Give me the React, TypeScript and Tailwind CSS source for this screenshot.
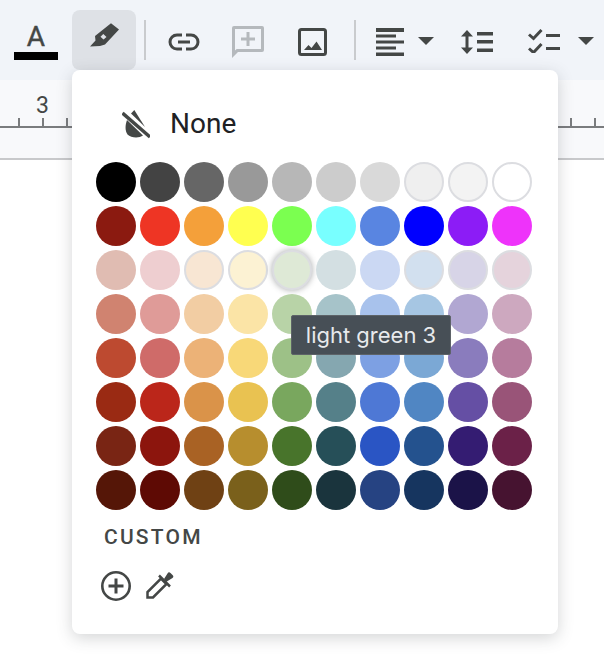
const rows: string[][] = [
  ["#000000", "#434343", "#666666", "#999999", "#b7b7b7", "#cccccc", "#d9d9d9", "#efefef", "#f3f3f3", "#ffffff"],
  ["#8b1a10", "#ee3524", "#f4a03a", "#ffff50", "#7bff50", "#78ffff", "#5985e1", "#0000ff", "#8c1cf6", "#ee33fa"],
  ["#e0bcb2", "#eeced0", "#f8e6d3", "#fcf2d3", "#dee9d6", "#d3dfe2", "#cbd8f3", "#d2e0ef", "#d7d4e7", "#e5d3dc"],
  ["#d08370", "#df9b98", "#f2cda3", "#fbe4a6", "#b8d3a7", "#a6c3c9", "#a8c2ec", "#a6c6e3", "#b1a7d2", "#cda8bf"],
  ["#bd4a30", "#cf6b69", "#ecb277", "#f8d878", "#9dc187", "#85a7b0", "#7da0e3", "#7ba8d5", "#8a7cbd", "#b67c9d"],
  ["#9a2a13", "#bb261a", "#da9349", "#e9c251", "#79a75e", "#558089", "#4e78d5", "#5086c3", "#654fa4", "#995478"],
  ["#792514", "#8c150d", "#a96224", "#b78e2e", "#48742b", "#264f58", "#2a55c4", "#24528e", "#341c72", "#6b2148"],
  ["#551607", "#5e0a04", "#6f4114", "#7a601b", "#2f4c1a", "#1a343d", "#264382", "#16355f", "#1b1348", "#461330"],
];

// swatches pale enough to need an outline
const ringed = new Set(["#efefef", "#f3f3f3", "#ffffff", "#f8e6d3", "#fcf2d3", "#dee9d6", "#d2e0ef", "#d7d4e7", "#e5d3dc"]);

function Separator() {
  return <div className="w-[2px] h-10 bg-[#c9cbce]" />;
}

function HighlighterIcon() {
  return (
    <svg width="32" height="28" viewBox="0 0 32 28" fill="currentColor" fillRule="evenodd">
      <path d="M23 0.300 31 6.500 17 21.500l-5 1.500-10 .500L7.500 17.500 7 13ZM15.300 11 12.500 13.700l3 2.800 3-2.600Z" />
    </svg>
  );
}

function LinkIcon() {
  return (
    <svg width="32" height="18" viewBox="0 0 32 18" fill="none" stroke="currentColor" strokeWidth="3">
      <path d="M14 2H9a7 7 0 0 0 0 14h5M18 2h5a7 7 0 0 1 0 14h-5M10 9h12" />
    </svg>
  );
}

function CommentIcon() {
  return (
    <svg width="32" height="32" viewBox="0 0 32 32" fill="currentColor" fillRule="evenodd">
      <path d="M2 0H30a2 2 0 0 1 2 2V24a2 2 0 0 1-2 2H6L0 32V2a2 2 0 0 1 2-2ZM3 3V24.500L4.700 23H29V3ZM14.500 6h3v5.500H23v3h-5.500V20h-3v-5.500H9v-3h5.500Z" />
    </svg>
  );
}

function ImageIcon() {
  return (
    <svg width="29" height="28" viewBox="0 0 29 28" fill="none">
      <rect x="1.500" y="1.500" width="26" height="25" rx="2" stroke="currentColor" strokeWidth="3" />
      <path fill="currentColor" d="M6 22l4.500-5 3 3 5-6.500L24 22Z" />
    </svg>
  );
}

function AlignIcon() {
  return (
    <svg width="28" height="28" viewBox="0 0 28 28" fill="currentColor">
      <path d="M0 0h28v4H0ZM0 6.500h20v3H0ZM0 12.500h28v3H0ZM0 18.500h20v3H0ZM0 24.500h28v3.500H0Z" />
    </svg>
  );
}

function Caret() {
  return (
    <svg width="16" height="8" viewBox="0 0 16 8" fill="currentColor">
      <path d="M0 0h16L8 8Z" />
    </svg>
  );
}

function LineSpacingIcon() {
  return (
    <svg width="32" height="24" viewBox="0 0 32 24" fill="currentColor">
      <path d="M6 0l6 6.500H7.500v11H12L6 24 0 17.500h4.500v-11H0ZM16 2h16v3.500H16ZM16 10h16v3.500H16ZM16 18.500h16V22H16Z" />
    </svg>
  );
}

function ChecklistIcon() {
  return (
    <svg width="32" height="24" viewBox="0 0 32 24" fill="none" stroke="currentColor">
      <path strokeWidth="3" d="M1 5.500l4.500 4L13.500 1M1 19.500l4.500 4L13.500 15" />
      <path strokeWidth="3" d="M18 6.500h14M18 19.500h14" />
    </svg>
  );
}

function NoneIcon() {
  return (
    <svg width="28" height="30" viewBox="0 0 28 30" fill="currentColor">
      <path d="M0.500 3 28 27" stroke="currentColor" strokeWidth="3.500" fill="none" />
      <path d="M12.300 0 23 17 9 3.500Z" />
      <path d="M5 10 21 25.500C17 28.500 9 28 5.500 24.500 3 21 3 15 5 10Z" />
    </svg>
  );
}

function AddIcon() {
  return (
    <svg width="30" height="30" viewBox="0 0 30 30" fill="none" stroke="currentColor">
      <circle cx="15" cy="15" r="13.700" strokeWidth="2.600" />
      <path strokeWidth="3" d="M15 7.500v15M7.500 15h15" />
    </svg>
  );
}

function EyedropperIcon() {
  return (
    <svg width="28" height="28" viewBox="0 0 28 28" fill="none" stroke="currentColor">
      <path strokeWidth="2.500" d="M1.500 26.500V21L15 7.500l5.500 5.500L7 26.500Z" />
      <path strokeWidth="2.500" d="M13 4.500 24 15.500" />
      <path fill="currentColor" stroke="none" d="M18 8l3.500-5.500a2 2 0 0 1 3-.5l2 2a2 2 0 0 1 0 3L20 11Z" />
    </svg>
  );
}

function Ruler() {
  return (
    <div className="h-[80px] bg-[#f8f9fb] border-b-2 border-[#c8c9cb]">
      <div className="pt-[14px] pl-[36px] h-[38px] text-[23px] leading-[24px] text-[#444746]">3</div>
      <div className="flex h-[8px] items-end gap-[22px] pl-[18px] border-b-2 border-[#7a7c7e] box-content overflow-hidden">
        {Array.from({ length: 25 }).map((_, i) => (
          <div key={i} className="w-[2px] h-[8px] shrink-0 bg-[#7a7c7e]" />
        ))}
      </div>
    </div>
  );
}

export default function App() {
  return (
    <div className="relative w-[604px] h-[668px] overflow-hidden bg-white font-['Roboto',sans-serif]">
      {/* Toolbar */}
      <div className="flex items-center h-[80px] bg-[#f1f4f9] text-[#444746]">
        <div className="ml-[14px] w-[44px] flex flex-col items-center">
          <span className="text-[28px] leading-[32px] h-[32px] mt-[1px] [-webkit-text-stroke:0.4px_#444746]">A</span>
          <div className="w-[44px] h-2 -mt-[1px] bg-black" />
        </div>
        <div className="ml-[14px] w-[64px] h-[60px] rounded-lg bg-[#dee1e6] flex items-start justify-center pt-[13px]">
          <HighlighterIcon />
        </div>
        <div className="ml-2"><Separator /></div>
        <div className="ml-[22px] mt-[3px]"><LinkIcon /></div>
        <div className="ml-[32px] mt-[4px] text-[#b5b9bd]"><CommentIcon /></div>
        <div className="ml-[34px] mt-[4px]"><ImageIcon /></div>
        <div className="ml-[27px]"><Separator /></div>
        <div className="ml-[20px] mt-[4px]"><AlignIcon /></div>
        <div className="ml-[14px] mt-[2px]"><Caret /></div>
        <div className="ml-[27px] mt-[3px]"><LineSpacingIcon /></div>
        <div className="ml-[35px] mt-[2px]"><ChecklistIcon /></div>
        <div className="ml-[18px] mt-[2px]"><Caret /></div>
      </div>

      <Ruler />

      {/* Highlight colour menu */}
      <div className="absolute left-[72px] top-[70px] w-[486px] h-[564px] rounded-lg bg-white shadow-[0_4px_16px_rgba(60,64,67,0.22)] pl-[24px]">
        <div className="flex items-center h-[92px] pl-[26px] pt-[15px] gap-[20px]">
          <div className="mt-[3px] text-[#444746]"><NoneIcon /></div>
          <span className="text-[28px] leading-[32px] text-[#202124]">None</span>
        </div>
        <div className="flex flex-col gap-1">
          {rows.map((row, r) => (
            <div key={r} className="flex gap-1">
              {row.map((c, i) => (
                <div
                  key={i}
                  style={{ backgroundColor: c }}
                  className={`w-10 h-10 rounded-full ${ringed.has(c) ? "border-2 border-[#dcdde1]" : ""} ${c === "#dee9d6" ? "shadow-[0_0_6px_rgba(60,64,67,0.45)]" : ""}`}
                />
              ))}
            </div>
          ))}
        </div>
        <div className="mt-[15px] ml-[8px] text-[21px] leading-[24px] font-medium tracking-[0.105em] text-[#444746]">CUSTOM</div>
        <div className="mt-[22px] ml-[5px] flex items-start gap-[15px] text-[#444746]">
          <AddIcon />
          <EyedropperIcon />
        </div>
      </div>

      {/* Tooltip over the hovered swatch */}
      <div className="absolute left-[291px] top-[315px] w-[160px] h-[40px] flex items-center justify-center rounded-[2px] bg-[#474f56] border border-[#5d6368] font-['Inter',sans-serif] text-[22px] text-[#e8eaed]">
        light green 3
      </div>
    </div>
  );
}
